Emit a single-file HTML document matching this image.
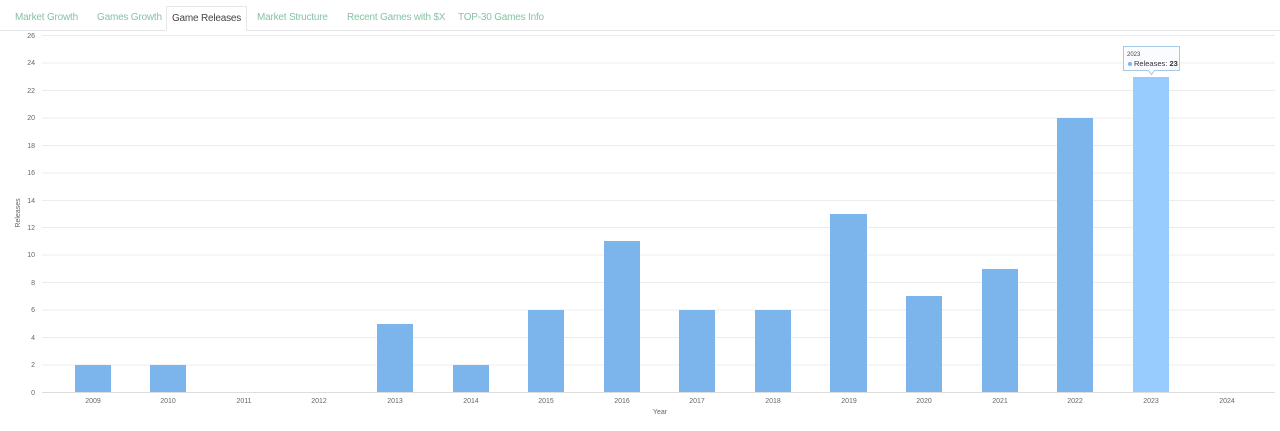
<!DOCTYPE html>
<html><head><meta charset="utf-8"><style>
body{margin:0;width:1280px;height:431px;background:#fff;font-family:"Liberation Sans",sans-serif;overflow:hidden;position:relative}
.tabs{position:absolute;left:0;top:0;width:1280px;height:30px;border-bottom:1px solid #e6e6e6}
.tab{position:absolute;top:12px;font-size:10px;letter-spacing:-0.2px;color:#86c2a4;white-space:nowrap}
.act{position:absolute;left:166px;top:6px;width:81px;height:25px;border:1px solid #e6e6e6;border-bottom:1px solid #fff;background:#fff;box-sizing:border-box;font-size:10px;letter-spacing:-0.2px;color:#444;text-align:center;line-height:24px;white-space:nowrap}
svg{position:absolute;left:0;top:0}
</style></head><body>
<div class="tabs">
<span class="tab" style="left:15px">Market Growth</span>
<span class="tab" style="left:97px">Games Growth</span>
<div class="act">Game Releases</div>
<span class="tab" style="left:257px">Market Structure</span>
<span class="tab" style="left:347px">Recent Games with $X</span>
<span class="tab" style="left:458px">TOP-30 Games Info</span>
</div>
<svg width="1280" height="431" font-family="Liberation Sans, sans-serif" font-size="7" fill="#666">
<g stroke="#ececec" stroke-width="1">
<line x1="42" x2="1275" y1="35.5" y2="35.5"/><line x1="42" x2="1275" y1="63" y2="63"/><line x1="42" x2="1275" y1="90.5" y2="90.5"/><line x1="42" x2="1275" y1="118" y2="118"/><line x1="42" x2="1275" y1="145.5" y2="145.5"/><line x1="42" x2="1275" y1="173" y2="173"/><line x1="42" x2="1275" y1="200.5" y2="200.5"/><line x1="42" x2="1275" y1="227.5" y2="227.5"/><line x1="42" x2="1275" y1="255" y2="255"/><line x1="42" x2="1275" y1="282.5" y2="282.5"/><line x1="42" x2="1275" y1="310" y2="310"/><line x1="42" x2="1275" y1="337.5" y2="337.5"/><line x1="42" x2="1275" y1="365" y2="365"/>
<line x1="42" x2="1275" y1="392.5" y2="392.5" stroke="#ddd"/>
</g>
<g text-anchor="end">
<text x="35" y="38">26</text><text x="35" y="65">24</text><text x="35" y="93">22</text><text x="35" y="120">20</text><text x="35" y="148">18</text><text x="35" y="175">16</text><text x="35" y="203">14</text><text x="35" y="230">12</text><text x="35" y="257">10</text><text x="35" y="285">8</text><text x="35" y="312">6</text><text x="35" y="340">4</text><text x="35" y="367">2</text><text x="35" y="395">0</text>
</g>
<text transform="translate(20,213) rotate(-90)" text-anchor="middle">Releases</text>
<g fill="#7cb5ec">
<rect x="75" y="365" width="36" height="27"/><rect x="150" y="365" width="36" height="27"/>
<rect x="377" y="324" width="36" height="68"/><rect x="453" y="365" width="36" height="27"/>
<rect x="528" y="310" width="36" height="82"/><rect x="604" y="241" width="36" height="151"/>
<rect x="679" y="310" width="36" height="82"/><rect x="755" y="310" width="36" height="82"/>
<rect x="830" y="214" width="37" height="178"/><rect x="906" y="296" width="36" height="96"/>
<rect x="982" y="269" width="36" height="123"/><rect x="1057" y="118" width="36" height="274"/>
</g>
<rect x="1133" y="77" width="36" height="315" fill="#98ccff"/>
<g text-anchor="middle">
<text x="93" y="403">2009</text><text x="168" y="403">2010</text><text x="244" y="403">2011</text><text x="319" y="403">2012</text><text x="395" y="403">2013</text><text x="471" y="403">2014</text><text x="546" y="403">2015</text><text x="622" y="403">2016</text><text x="697" y="403">2017</text><text x="773" y="403">2018</text><text x="849" y="403">2019</text><text x="924" y="403">2020</text><text x="1000" y="403">2021</text><text x="1075" y="403">2022</text><text x="1151" y="403">2023</text><text x="1227" y="403">2024</text>
<text x="660" y="414">Year</text>
</g>
<path d="M1123.5 46.5h56v24h-25l-3 4l-3-4h-25z" fill="#fafcff" stroke="#a8c8e8" stroke-width="1"/>
<text x="1127" y="56" font-size="6" fill="#444">2023</text>
<circle cx="1130" cy="64" r="2" fill="#7cb5ec"/>
<text x="1134" y="66" font-size="7.5" fill="#333">Releases: <tspan font-weight="bold">23</tspan></text>
</svg>
</body></html>
